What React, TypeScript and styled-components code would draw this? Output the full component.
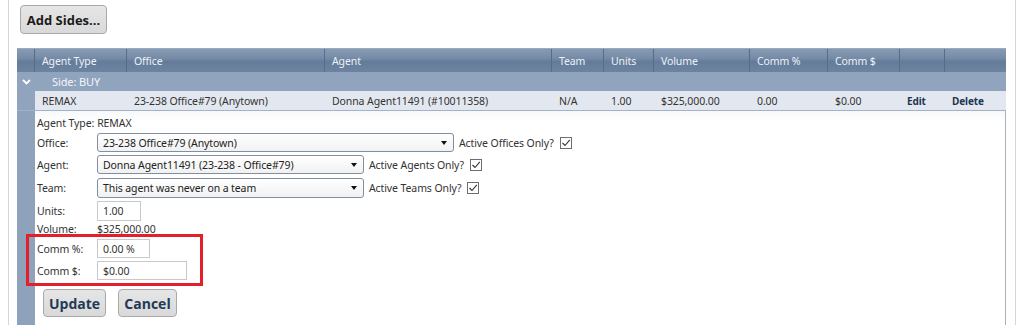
import React from "react";
import styled, { createGlobalStyle } from "styled-components";

const Global = createGlobalStyle`
  html, body { margin: 0; padding: 0; background: #fff; }
  body { font-family: "Noto Sans", "Open Sans", sans-serif; color: #333; }
  * { box-sizing: border-box; }
`;

const Page = styled.div`
  margin-left: 8px;
  width: 1008px;
  height: 325px;
  border-left: 1px solid #d6d6d6;
  border-right: 1px solid #d6d6d6;
  padding: 5px 0 0 8px;
  overflow: hidden;
`;

const ActionButton = styled.button<{ $size?: number; $color?: string; $w?: number }>`
  height: ${(p) => (p.$size && p.$size > 13 ? 28 : 29)}px;
  width: ${(p) => p.$w ?? 86}px;
  padding: 0;
  border: 1px solid #a9a9a9;
  border-radius: 4px;
  background: linear-gradient(#e6e6e6, #d9d9d9);
  font-family: "Open Sans", "Noto Sans", sans-serif;
  font-weight: 700;
  font-size: ${(p) => p.$size ?? 13}px;
  color: ${(p) => p.$color ?? "#1b1b1b"};
  cursor: pointer;
`;

const TopBar = styled.div`
  padding-left: 3px;
  margin-bottom: 14px;
`;

const COLS = "18px 92px 198px 227px 52px 50px 96px 78px 72px 45px 61px";

const Grid = styled.div`
  width: 989px;
  font-size: 10.5px;
  letter-spacing: -0.1px;
`;

const HeaderRow = styled.div`
  display: grid;
  grid-template-columns: ${COLS};
  height: 24px;
  background: linear-gradient(#879bb3 0%, #768ba6 40%, #647c9a 55%, #6d84a1 100%);
  border-top: 1px solid #9aabc0;
`;

const HeadCell = styled.div<{ $last?: boolean }>`
  display: flex;
  align-items: center;
  padding-left: 7px;
  color: #eef2f7;
  border-right: ${(p) => (p.$last ? "none" : "1px solid #566d8a")};
  white-space: nowrap;
`;

const GroupRow = styled.div`
  display: flex;
  align-items: center;
  height: 19px;
  background: #91a4bd;
  color: #f3f6fa;
  font-size: 11px;
`;

const Chevron = styled.span`
  width: 18px;
  display: flex;
  justify-content: center;
`;

const GroupLabel = styled.span`
  padding-left: 17px;
`;

const DataRow = styled.div`
  display: grid;
  grid-template-columns: ${COLS};
  height: 20px;
  background: #e3e8f0;
  border-bottom: 1px solid #a3b2c6;
`;

const Gutter = styled.div`
  background: #91a4bd;
`;

const Cell = styled.div<{ $link?: boolean }>`
  display: flex;
  align-items: center;
  padding-left: 7px;
  white-space: nowrap;
  color: ${(p) => (p.$link ? "#1e3650" : "#333")};
  font-weight: ${(p) => (p.$link ? 700 : 400)};
  font-size: ${(p) => (p.$link ? "10px" : "10.5px")};
`;

const EditArea = styled.div`
  display: flex;
  height: 220px;
  border-right: 1px solid #a9b1bc;
`;

const LeftBar = styled.div`
  width: 18px;
  flex: none;
  background: #8fa2bc;
`;

const Form = styled.div`
  position: relative;
  flex: 1;
  padding: 5px 0 0 2px;
  background: linear-gradient(#f7f8fa 0px, #ffffff 10px);
`;

const FormRow = styled.div<{ $h?: number; $mb?: number }>`
  display: flex;
  align-items: center;
  height: ${(p) => p.$h ?? 19}px;
  margin-bottom: ${(p) => p.$mb ?? 3}px;
`;

const Label = styled.span<{ $w?: number }>`
  width: ${(p) => (p.$w ? `${p.$w}px` : "auto")};
  margin-right: ${(p) => (p.$w ? 0 : 3)}px;
  flex: none;
  white-space: nowrap;
`;

const SelectBox = styled.div<{ $w: number }>`
  width: ${(p) => p.$w}px;
  height: 100%;
  display: flex;
  align-items: center;
  justify-content: space-between;
  padding: 0 6px 0 5px;
  border: 1px solid #7f8ea3;
  border-radius: 3px;
  background: linear-gradient(#ffffff, #f1f1f1);
  color: #222;
`;

const Caret = styled.span`
  width: 0;
  height: 0;
  border-left: 3.5px solid transparent;
  border-right: 3.5px solid transparent;
  border-top: 4px solid #111;
`;

const CheckLabel = styled.span`
  margin-left: 5px;
  white-space: nowrap;
`;

const Check = styled.span`
  display: inline-flex;
  width: 12px;
  height: 12px;
  margin-left: 6px;
  border: 1px solid #6e6e6e;
  background: #fff;
  align-items: center;
  justify-content: center;
`;

const TextInput = styled.input<{ $w: number }>`
  width: ${(p) => p.$w}px;
  height: 100%;
  border: 1px solid #c9c9c9;
  padding: 0 5px;
  font-family: "Noto Sans", "Open Sans", sans-serif;
  font-size: 10.5px;
  letter-spacing: -0.1px;
  color: #333;
  background: #fff;
  outline: none;
`;

const Annotation = styled.div`
  position: absolute;
  left: -9px;
  top: 123px;
  width: 177px;
  height: 52px;
  border: 3px solid #e51f2a;
  pointer-events: none;
`;

const ButtonBar = styled.div`
  display: flex;
  gap: 12px;
  margin-top: 9px;
  padding-left: 6px;
`;

const CheckMark = () => (
  <svg width="10" height="10" viewBox="0 0 10 10">
    <polyline points="1.5,5 4,7.5 8.8,1.8" fill="none" stroke="#333" strokeWidth="1.1" />
  </svg>
);

const ChevronIcon = () => (
  <svg width="9" height="6" viewBox="0 0 9 6">
    <polyline points="1,1 4.5,4.5 8,1" fill="none" stroke="#fff" strokeWidth="1.8" />
  </svg>
);

const headers = ["", "Agent Type", "Office", "Agent", "Team", "Units", "Volume", "Comm %", "Comm $", "", ""];

export default function App() {
  return (
    <>
      <Global />
      <Page>
        <TopBar>
          <ActionButton $w={87}>Add Sides...</ActionButton>
        </TopBar>
        <Grid>
          <HeaderRow>
            {headers.map((h, i) => (
              <HeadCell key={i} $last={i === headers.length - 1}>
                {h}
              </HeadCell>
            ))}
          </HeaderRow>
          <GroupRow>
            <Chevron>
              <ChevronIcon />
            </Chevron>
            <GroupLabel>Side: BUY</GroupLabel>
          </GroupRow>
          <DataRow>
            <Gutter />
            <Cell>REMAX</Cell>
            <Cell>23-238 Office#79 (Anytown)</Cell>
            <Cell>Donna Agent11491 (#10011358)</Cell>
            <Cell>N/A</Cell>
            <Cell>1.00</Cell>
            <Cell>$325,000.00</Cell>
            <Cell>0.00</Cell>
            <Cell>$0.00</Cell>
            <Cell $link>Edit</Cell>
            <Cell $link>Delete</Cell>
          </DataRow>
          <EditArea>
            <LeftBar />
            <Form>
              <FormRow $h={14} $mb={3}>
                <Label>Agent Type:</Label>
                <span>REMAX</span>
              </FormRow>
              <FormRow>
                <Label $w={60}>Office:</Label>
                <SelectBox $w={357}>
                  <span>23-238 Office#79 (Anytown)</span>
                  <Caret />
                </SelectBox>
                <CheckLabel>Active Offices Only?</CheckLabel>
                <Check>
                  <CheckMark />
                </Check>
              </FormRow>
              <FormRow $mb={4}>
                <Label $w={60}>Agent:</Label>
                <SelectBox $w={267}>
                  <span>Donna Agent11491 (23-238 - Office#79)</span>
                  <Caret />
                </SelectBox>
                <CheckLabel>Active Agents Only?</CheckLabel>
                <Check>
                  <CheckMark />
                </Check>
              </FormRow>
              <FormRow $h={20}>
                <Label $w={60}>Team:</Label>
                <SelectBox $w={267}>
                  <span>This agent was never on a team</span>
                  <Caret />
                </SelectBox>
                <CheckLabel>Active Teams Only?</CheckLabel>
                <Check>
                  <CheckMark />
                </Check>
              </FormRow>
              <FormRow $h={20} $mb={1}>
                <Label $w={60}>Units:</Label>
                <TextInput $w={44} value="1.00" readOnly />
              </FormRow>
              <FormRow $h={14} $mb={3}>
                <Label $w={60}>Volume:</Label>
                <span>$325,000.00</span>
              </FormRow>
              <FormRow $mb={3}>
                <Label $w={60}>Comm %:</Label>
                <TextInput $w={53} value="0.00 %" readOnly />
              </FormRow>
              <FormRow>
                <Label $w={60}>Comm $:</Label>
                <TextInput $w={90} value="$0.00" readOnly />
              </FormRow>
              <ButtonBar>
                <ActionButton $size={14} $color="#1f3a56" $w={63}>
                  Update
                </ActionButton>
                <ActionButton $size={14} $color="#1f3a56" $w={59}>
                  Cancel
                </ActionButton>
              </ButtonBar>
              <Annotation />
            </Form>
          </EditArea>
        </Grid>
      </Page>
    </>
  );
}
